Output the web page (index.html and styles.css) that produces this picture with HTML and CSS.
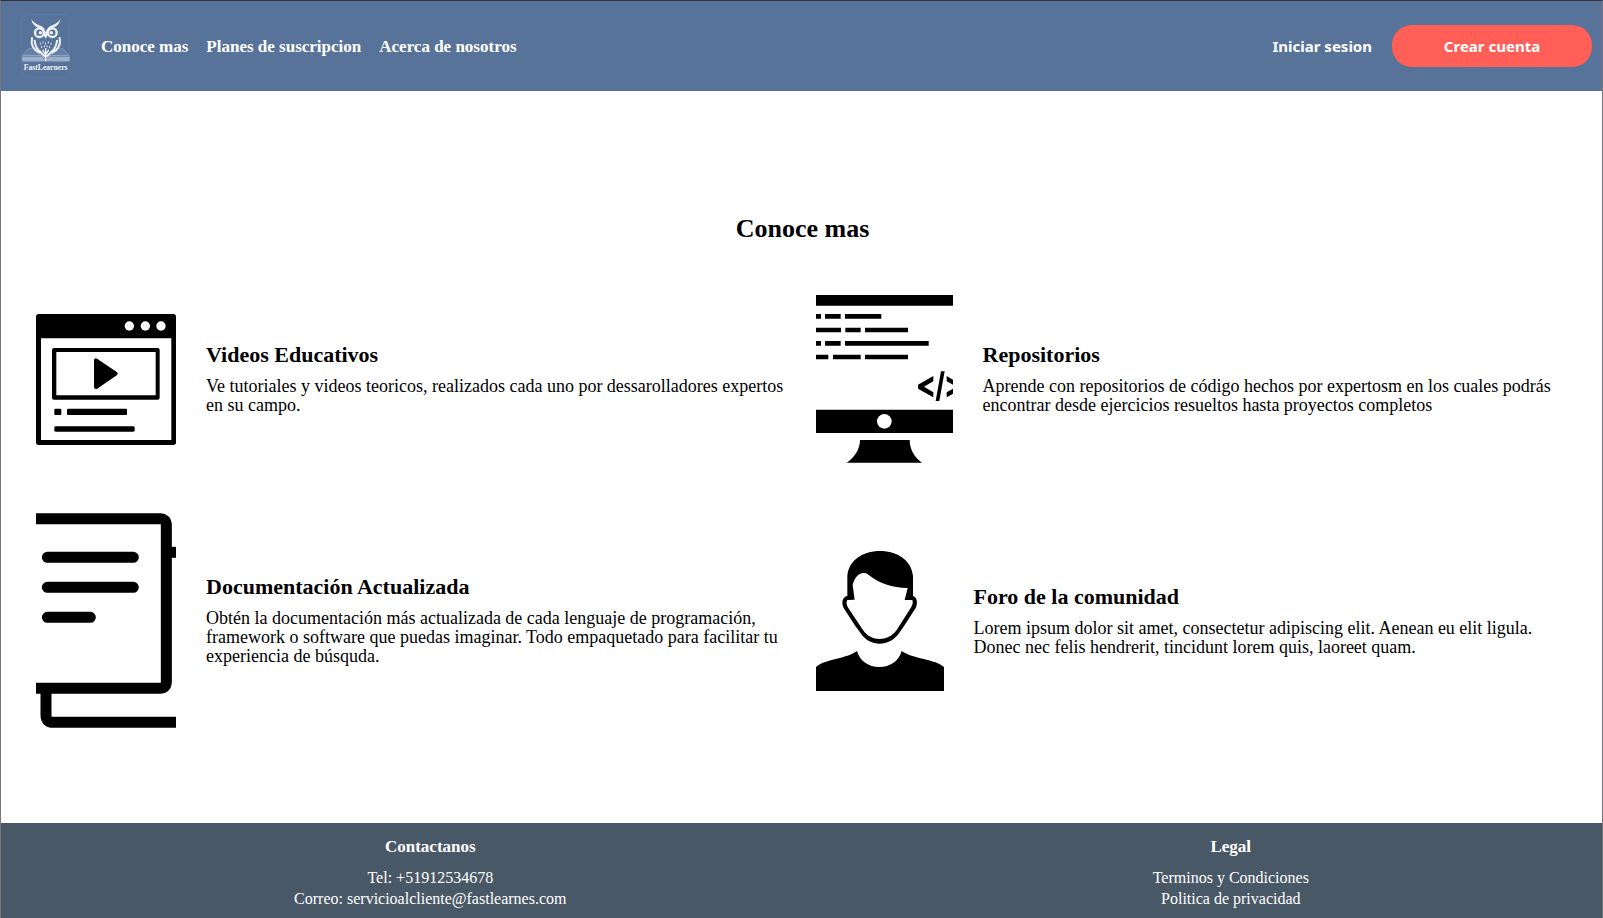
FILE: index.html
```html
<!DOCTYPE html>
<html lang="es">
<head>
<meta charset="utf-8">
<title>FastLearners</title>
<link rel="stylesheet" href="styles.css">
</head>
<body>
<header class="header">
  <a class="logo" href="#" aria-label="FastLearners">
    <svg width="49" height="64" viewBox="33 12 147 192">
      <path d="M47 14H167L179 26V190L167 202H47L35 190V26Z" fill="none" stroke="#6480a5" stroke-width="1.5"/>
      <path d="M37 136L56 116H82L107 140L132 116H158L178 136V153H37Z" fill="#6480a7" stroke="#93a8c6" stroke-width="2"/>
      <path d="M37 140H96L107 151L118 140H178V154H37Z" fill="#9db0cb"/>
      <path d="M40 136H94L107 149L120 136H175" fill="none" stroke="#c5d1e2" stroke-width="1.5"/>
      <path d="M64 28C72 42 87 44 98 51C103 55 106 62 107 68C109 62 112 55 117 51C128 44 143 42 151 28C148 49 130 53 120 58C114 63 112 70 107 84C103 70 101 63 95 58C85 53 67 49 64 28Z" fill="#eef3fa"/>
      <g fill="#587399" stroke="#eef3fa" stroke-width="7"><circle cx="88" cy="68" r="13"/><circle cx="127" cy="68" r="13"/></g>
      <circle cx="91" cy="68" r="5" fill="#eef3fa"/><circle cx="124" cy="68" r="5" fill="#eef3fa"/>
      <path d="M107 66L113 76L107 86L101 76Z" fill="#eef3fa"/>
      <g fill="none" stroke="#eef3fa" stroke-width="6" stroke-linecap="round"><path d="M66 84C62 104 70 119 88 128"/><path d="M74 92C75 114 88 124 104 138"/><path d="M149 84C153 104 145 119 127 128"/><path d="M141 92C140 114 127 124 111 138"/></g>
      <path d="M91 98v6M99 94v6M107 98v6M115 94v6M123 98v6M95 108v6M103 106v6M111 106v6M119 108v6M99 118v6M115 118v6" stroke="#dfe7f2" stroke-width="3"/>
      <path d="M107 114V152M107 134L99 122M107 134L115 122" stroke="#fff" stroke-width="4" fill="none"/>
      <text class="logo-text" x="107" y="179" text-anchor="middle">FastLearners</text>
    </svg>
  </a>
  <nav class="nav">
    <a href="#conoce">Conoce mas</a>
    <a href="#planes">Planes de suscripcion</a>
    <a href="#acerca">Acerca de nosotros</a>
  </nav>
  <div class="actions">
    <button class="login" type="button">Iniciar sesion</button>
    <button class="signup" type="button">Crear cuenta</button>
  </div>
</header>
<main class="main" id="conoce">
  <h1 class="title">Conoce mas</h1>
  <div class="features">
    <article class="feature">
      <svg width="140" height="131" viewBox="48 39 420 393" aria-hidden="true">
        <rect x="48" y="39" width="420" height="393" rx="8"/>
        <path fill="#fff" d="M63 112H454V417H63Z"/>
        <g fill="#fff"><circle cx="328" cy="75" r="14"/><circle cx="376" cy="75" r="14"/><circle cx="423" cy="75" r="14"/></g>
        <rect x="96" y="141" width="323" height="155" rx="6"/>
        <path fill="#fff" d="M109 153H407V283H109Z"/>
        <path d="M228 178V258L287 218Z" stroke="#000" stroke-width="12" stroke-linejoin="round"/>
        <rect x="103" y="323" width="21" height="19" rx="3"/><rect x="141" y="323" width="180" height="19" rx="3"/><rect x="103" y="376" width="241" height="16" rx="4"/>
      </svg>
      <div class="text">
        <h2>Videos Educativos</h2>
        <p>Ve tutoriales y videos teoricos, realizados cada uno por dessarolladores expertos en su campo.</p>
      </div>
    </article>
    <article class="feature">
      <svg width="137" height="168" viewBox="45 45 411 504" aria-hidden="true">
        <path d="M45 45H456V77H45Z"/>
        <path d="M45 109H60M72 109H119M132 109H241M45 150H120M133 150H179M192 150H321M45 190H60M72 190H119M132 190H383M45 231H82M96 231H179M192 231H321" stroke="#000" stroke-width="14"/>
        <path d="M397 288V304L369 320L397 337V352L351 326V314ZM420 274H431L415 363H404ZM437 288L456 299V314L437 304ZM456 326V341L437 352V337Z"/>
        <path d="M45 389H456V459H45Z"/><circle cx="250" cy="424" r="22" fill="#fff"/>
        <path d="M177 480H326C326 510 342 533 363 548H137C160 533 177 508 177 480Z"/>
      </svg>
      <div class="text">
        <h2>Repositorios</h2>
        <p>Aprende con repositorios de código hechos por expertosm en los cuales podrás encontrar desde ejercicios resueltos hasta proyectos completos</p>
      </div>
    </article>
    <article class="feature">
      <svg width="140" height="215" viewBox="48 39 420 645" aria-hidden="true">
        <g fill="none" stroke="#000" stroke-width="33">
          <path d="M48 56H419Q439 56 439 77V545Q439 565 419 565H48"/>
          <path d="M78 565V646Q78 667 99 667H468"/>
          <path d="M439 157H468"/>
          <path stroke-linecap="round" d="M82 172H340M82 262H340M82 352H211"/>
        </g>
      </svg>
      <div class="text">
        <h2>Documentación Actualizada</h2>
        <p>Obtén la documentación más actualizada de cada lenguaje de programación, framework o software que puedas imaginar. Todo empaquetado para facilitar tu experiencia de búsquda.</p>
      </div>
    </article>
    <article class="feature">
      <svg width="128" height="140" viewBox="45 33 384 420" aria-hidden="true">
        <path d="M139 168V108C143 62 184 33 237 33C290 33 332 62 336 108V168C350 171 350 192 344 204C327 230 311 256 294 280C277 303 257 311 236 311C215 311 195 303 179 280C161 256 145 230 128 204C121 190 123 171 139 168Z"/>
        <path fill="#fff" d="M155 136C159 115 173 99 187 99C192 99 197 99 202 104C235 130 273 143 320 144L311 180H334C337 187 334 197 329 204L287 270C273 289 255 297 236 297C217 297 199 289 186 270L142 204C136 195 135 187 139 180L161 179Z"/>
        <path d="M168 333C176 363 203 381 235 381C267 381 294 363 302 333C333 356 405 358 429 381V453H45V381C69 358 138 356 168 333Z"/>
      </svg>
      <div class="text">
        <h2>Foro de la comunidad</h2>
        <p>Lorem ipsum dolor sit amet, consectetur adipiscing elit. Aenean eu elit ligula. Donec nec felis hendrerit, tincidunt lorem quis, laoreet quam.</p>
      </div>
    </article>
  </div>
</main>
<footer class="footer">
  <section>
    <h3>Contactanos</h3>
    <p>Tel: +51912534678</p>
    <p>Correo: servicioalcliente@fastlearnes.com</p>
  </section>
  <section>
    <h3>Legal</h3>
    <p><a href="#terminos">Terminos y Condiciones</a></p>
    <p><a href="#privacidad">Politica de privacidad</a></p>
  </section>
</footer>
</body>
</html>
```
FILE: styles.css
```css
* { box-sizing: border-box; }

body {
  margin: 0;
  min-height: 100vh;
  display: flex;
  flex-direction: column;
  border: 1px solid #77777b;
  border-top-color: #32343e;
  border-bottom: 0;
  background: #fff;
  color: #000;
  font-family: "Liberation Serif", serif;
  font-size: 18px;
  line-height: 19px;
}

h1, h2, h3, p { margin: 0; }
a { color: inherit; text-decoration: none; }
svg { display: block; flex-shrink: 0; }

.header {
  display: flex;
  align-items: center;
  padding: 13px 10px 13px 20px;
  background: #587399;
  color: #fff;
}
.logo-text {
  font-family: "Liberation Serif", serif;
  font-size: 23px;
  font-weight: bold;
  fill: #eef3fa;
}
.nav {
  display: flex;
  gap: 18px;
  margin-left: 31px;
  font-size: 17px;
  font-weight: bold;
}
.actions {
  display: flex;
  align-items: center;
  gap: 20px;
  margin-left: auto;
}
button {
  padding: 0;
  border: 0;
  background: none;
  color: #fff;
  font: bold 15px/20px "Noto Sans", sans-serif;
  cursor: pointer;
}
.signup {
  width: 200px;
  padding: 11px 0;
  border-radius: 20px;
  background: #ff5f57;
}

.main {
  flex: 1;
  padding: 122px 33px 94px 35px;
}
.title {
  margin-bottom: 50px;
  text-align: center;
  font-size: 26px;
  line-height: 32px;
}
.features {
  display: grid;
  grid-template-columns: 1fr 1fr;
  gap: 50px 26px;
}
.feature {
  display: flex;
  align-items: center;
  gap: 30px;
}
.text h2 {
  margin-bottom: 10px;
  font-size: 22px;
  line-height: 24px;
}

.footer {
  display: flex;
  justify-content: space-around;
  padding: 14px 0 9px;
  background: #495867;
  color: #fff;
  text-align: center;
  font-size: 16px;
  line-height: 21px;
}
.footer h3 {
  margin-bottom: 10px;
  font-size: 17px;
  line-height: 20px;
}
```
